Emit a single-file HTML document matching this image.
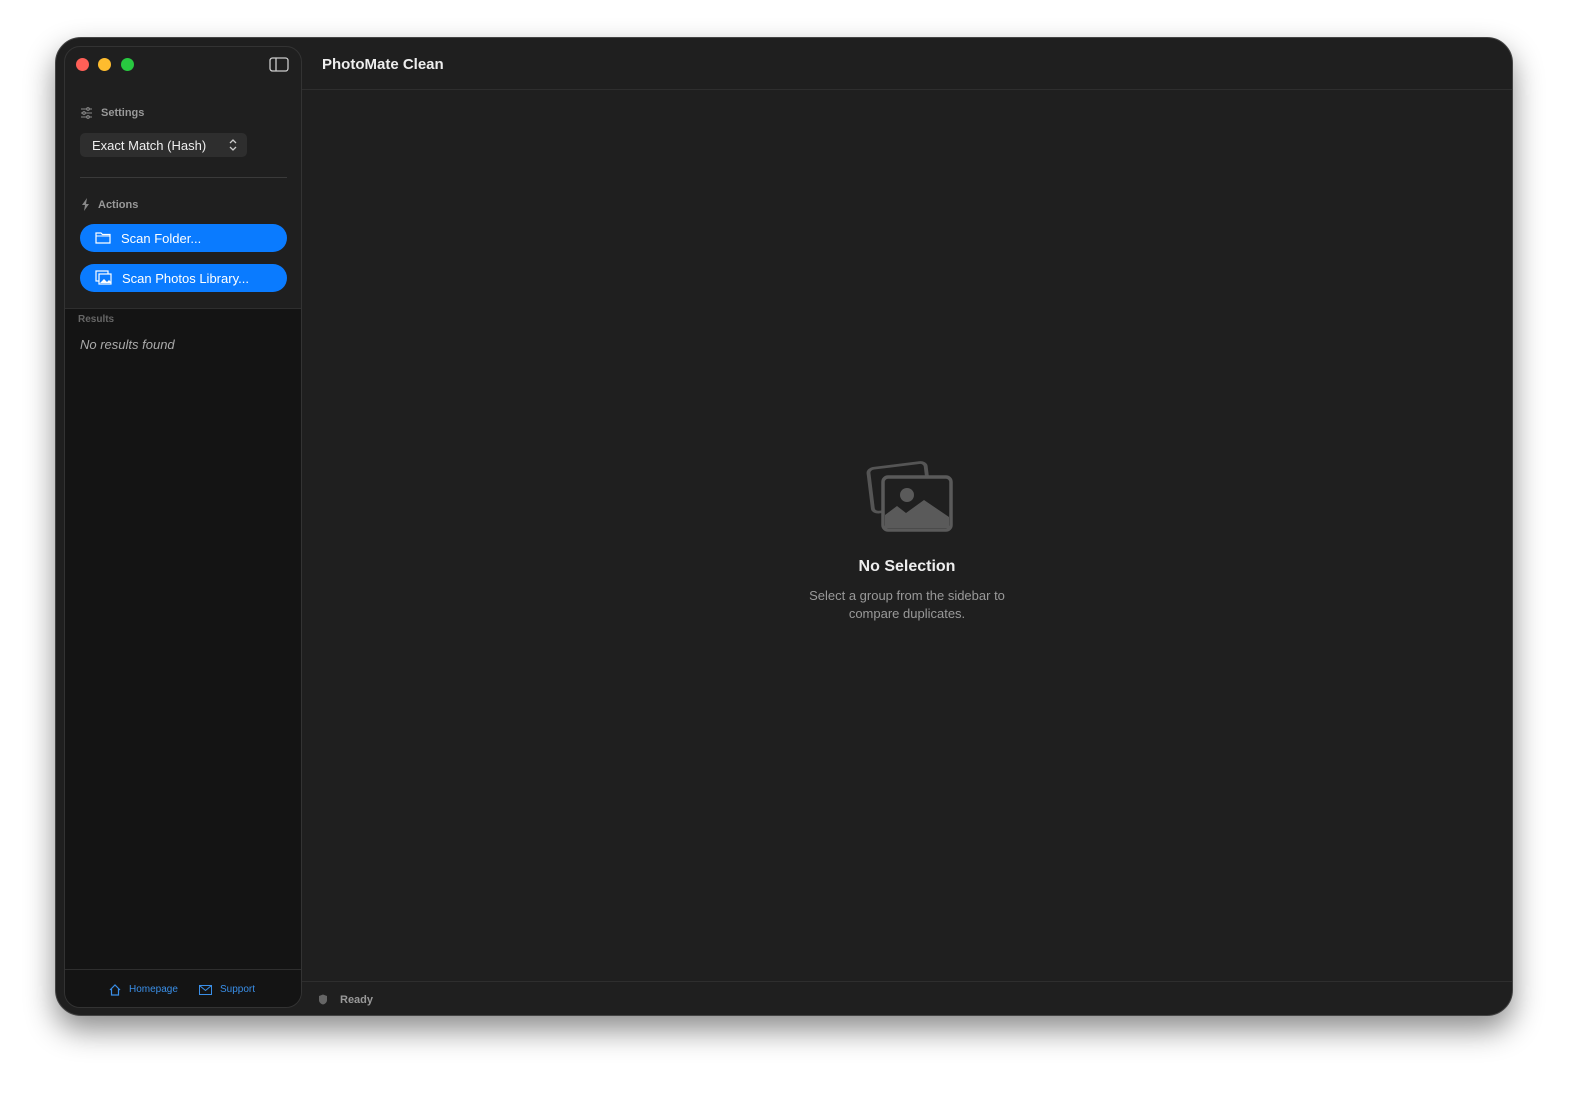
<!DOCTYPE html>
<html><head><style>
body{margin:0;width:1579px;height:1097px;background:#fff;font-family:"Liberation Sans",sans-serif;position:relative;overflow:hidden}
.win{position:absolute;left:55px;top:37px;width:1458px;height:979px;background:#1f1f1f;border-radius:26px;box-shadow:0 14px 30px rgba(0,0,0,.45);border:1px solid #444;box-sizing:border-box;overflow:hidden}
.side{position:absolute;left:8px;top:8px;width:238px;height:962px;background:#1f1f1f;border:1px solid #333;box-sizing:border-box;border-radius:16px;overflow:hidden}
.low{position:absolute;left:0;top:261px;right:0;bottom:0;background:#141414;border-top:1px solid #2e2e2e}
.t{position:absolute;white-space:nowrap}
.btn{position:absolute;left:15px;width:207px;height:28px;background:#0a7bff;border-radius:14px;color:#fff;font-size:13px}
</style></head><body>
<div class="win">
 <div class="side">
  <div style="position:absolute;left:11px;top:11px;width:13px;height:13px;border-radius:50%;background:#fe5f57"></div>
  <div style="position:absolute;left:33px;top:11px;width:13px;height:13px;border-radius:50%;background:#febc2e"></div>
  <div style="position:absolute;left:56px;top:11px;width:13px;height:13px;border-radius:50%;background:#28c840"></div>
  <svg style="position:absolute;left:204px;top:10px" width="20" height="16"><rect x="1" y="1" width="18" height="13" rx="2.5" fill="none" stroke="#ccc" stroke-width="1.3"/><line x1="7" y1="1" x2="7" y2="14" stroke="#ccc" stroke-width="1.3"/></svg>
  <svg style="position:absolute;left:15px;top:60px" width="13" height="12" stroke="#888" stroke-width="1.1"><line x1="1" y1="2" x2="12" y2="2"/><line x1="1" y1="6" x2="12" y2="6"/><line x1="1" y1="10" x2="12" y2="10"/><circle cx="8" cy="2" r="1.3" fill="#1f1f1f"/><circle cx="4" cy="6" r="1.3" fill="#1f1f1f"/><circle cx="8" cy="10" r="1.3" fill="#1f1f1f"/></svg>
  <div class="t" style="left:36px;top:60px;font-size:11px;font-weight:bold;color:#999">Settings</div>
  <div style="position:absolute;left:15px;top:86px;width:167px;height:24px;background:#2e2e2e;border-radius:5px"></div>
  <div class="t" style="left:27px;top:91px;font-size:13px;color:#eee">Exact Match (Hash)</div>
  <svg style="position:absolute;left:164px;top:92px" width="8" height="12" fill="none" stroke="#ccc" stroke-width="1.3"><path d="M1 4l3-3 3 3M1 8l3 3 3-3"/></svg>
  <div style="position:absolute;left:15px;top:130px;width:207px;height:1px;background:#3a3a3a"></div>
  <svg style="position:absolute;left:16px;top:151px" width="9" height="13"><path d="M6 0L1 7h3l-1 6 5-7H5z" fill="#888"/></svg>
  <div class="t" style="left:33px;top:152px;font-size:11px;font-weight:bold;color:#999">Actions</div>
  <div class="btn" style="top:177px"><svg style="position:absolute;left:15px;top:7px" width="16" height="13"><path d="M1 2h5l1.5 1.5H15V12H1z" fill="none" stroke="#fff" stroke-width="1.2"/><line x1="1" y1="5" x2="15" y2="5" stroke="#fff"/></svg><span class="t" style="left:41px;top:7px">Scan Folder...</span></div>
  <div class="btn" style="top:217px"><svg style="position:absolute;left:15px;top:6px" width="17" height="15"><rect x="1" y="1" width="12" height="10" fill="none" stroke="#fff" stroke-width="1.2"/><rect x="4" y="4" width="12" height="10" fill="#0a7bff" stroke="#fff" stroke-width="1.2"/><path d="M5 13l4-4 3 3 2-2 2 2v1z" fill="#fff"/></svg><span class="t" style="left:42px;top:7px">Scan Photos Library...</span></div>
  <div class="low">
   <div class="t" style="left:13px;top:5px;font-size:10px;font-weight:bold;color:#666">Results</div>
   <div class="t" style="left:15px;top:28px;font-size:13px;font-style:italic;color:#aaa">No results found</div>
   <div style="position:absolute;left:0;right:0;top:660px;height:1px;background:#2e2e2e"></div>
   <svg style="position:absolute;left:44px;top:675px" width="12" height="12"><path d="M1 6L6 1l5 5M2.5 5v6h7V5" fill="none" stroke="#3a8fe8" stroke-width="1.2"/></svg>
   <div class="t" style="left:64px;top:675px;font-size:10px;color:#3a8fe8">Homepage</div>
   <svg style="position:absolute;left:134px;top:676px" width="13" height="10"><rect x=".5" y=".5" width="12" height="9" fill="none" stroke="#3a8fe8"/><path d="M.5 .5l6 5 6-5" fill="none" stroke="#3a8fe8"/></svg>
   <div class="t" style="left:155px;top:675px;font-size:10px;color:#3a8fe8">Support</div>
  </div>
 </div>
 <div class="t" style="left:266px;top:18px;font-size:15px;font-weight:bold;color:#eee">PhotoMate Clean</div>
 <div style="position:absolute;left:246px;right:0;top:51px;height:1px;background:#2e2e2e"></div>
 <div style="position:absolute;left:246px;right:0;top:943px;height:1px;background:#2e2e2e"></div>
 <svg style="position:absolute;left:262px;top:956px" width="10" height="11"><path d="M5 0.5L9 2v4c0 2.5-2 4-4 4.5C3 10 1 8.5 1 6V2z" fill="#666"/></svg>
 <div class="t" style="left:284px;top:956px;font-size:11px;font-weight:bold;color:#999">Ready</div>
 <svg style="position:absolute;left:808px;top:420px" width="90" height="75">
  <rect x="3" y="5" width="48" height="52" rx="5" transform="rotate(-7 27 31) translate(3 4) scale(1.2 0.85)" fill="none" stroke="#555" stroke-width="3.2"/>
  <rect x="19" y="19" width="68" height="53" rx="5" fill="#1f1f1f" stroke="#5a5a5a" stroke-width="3.5"/>
  <circle cx="43" cy="37" r="7" fill="#5a5a5a"/>
  <path d="M21 70V57l12-9 9 7 18-13 25 17v11z" fill="#5a5a5a"/>
 </svg>
 <div class="t" style="left:0;width:1702px;text-align:center;top:520px;font-size:16px;font-weight:bold;color:#eee">No Selection</div>
 <div class="t" style="left:0;width:1702px;text-align:center;top:549px;font-size:13px;color:#999;line-height:18px">Select a group from the sidebar to<br>compare duplicates.</div>
</div>
</body></html>
